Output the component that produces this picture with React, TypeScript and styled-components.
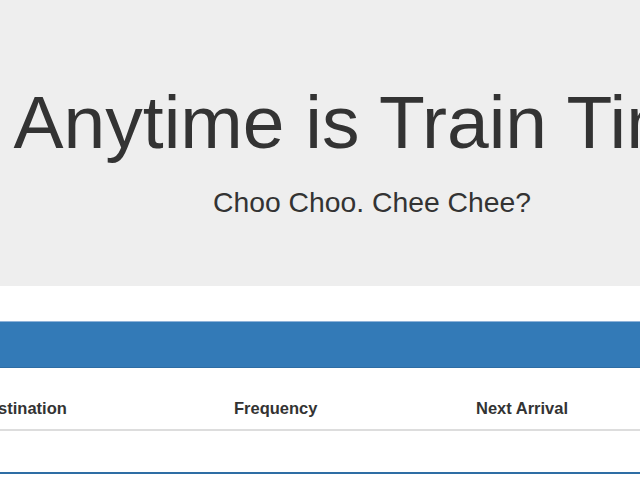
import React from "react";
import styled, { createGlobalStyle } from "styled-components";

const GlobalStyle = createGlobalStyle`
  html, body {
    margin: 0;
    padding: 0;
    background: #ffffff;
    overflow: hidden;
  }
  body {
    font-family: "Liberation Sans", Arial, Helvetica, sans-serif;
    color: #333333;
  }
`;

const Viewport = styled.div`
  width: 100%;
  height: 481px;
  overflow: hidden;
`;

const Page = styled.div`
  width: 1000px;
  margin-left: -128px;
`;

const Jumbotron = styled.header`
  background: #eeeeee;
  padding: 81px 0 64px;
  text-align: center;
`;

const Title = styled.h1`
  margin: 0;
  font-size: 75px;
  line-height: 82.5px;
  font-weight: 400;
  color: #333333;
  white-space: nowrap;
`;

const Lead = styled.p`
  margin: 19.5px 0 0;
  font-size: 28.3px;
  line-height: 39px;
  font-weight: 400;
  color: #333333;
`;

const Panel = styled.section`
  margin-top: 35px;
  border-top: 1px solid #8fb3d9;
  border-bottom: 2px solid #2e6da4;
  background: #ffffff;
`;

const PanelHeading = styled.div`
  height: 45px;
  background: #337ab7;
  border-bottom: 1px solid #2e6da4;
`;

const HeadRow = styled.div`
  display: grid;
  grid-template-columns: 97px 257px 242px 242px 1fr;
  border-bottom: 2px solid #dddddd;
`;

const HeadCell = styled.div`
  padding: 28px 8px 9px;
  font-size: 16.5px;
  line-height: 24px;
  font-weight: 700;
  color: #333333;
  white-space: nowrap;
`;

const EmptyBody = styled.div`
  height: 41px;
`;

const columns = ["Train Name", "Destination", "Frequency", "Next Arrival", "Minutes Away"];

export default function App() {
  return (
    <Viewport>
      <GlobalStyle />
      <Page>
        <Jumbotron>
          <Title>Anytime is Train Time</Title>
          <Lead>Choo Choo. Chee Chee?</Lead>
        </Jumbotron>
        <Panel>
          <PanelHeading />
          <HeadRow>
            {columns.map((c) => (
              <HeadCell key={c}>{c}</HeadCell>
            ))}
          </HeadRow>
          <EmptyBody />
        </Panel>
      </Page>
    </Viewport>
  );
}
